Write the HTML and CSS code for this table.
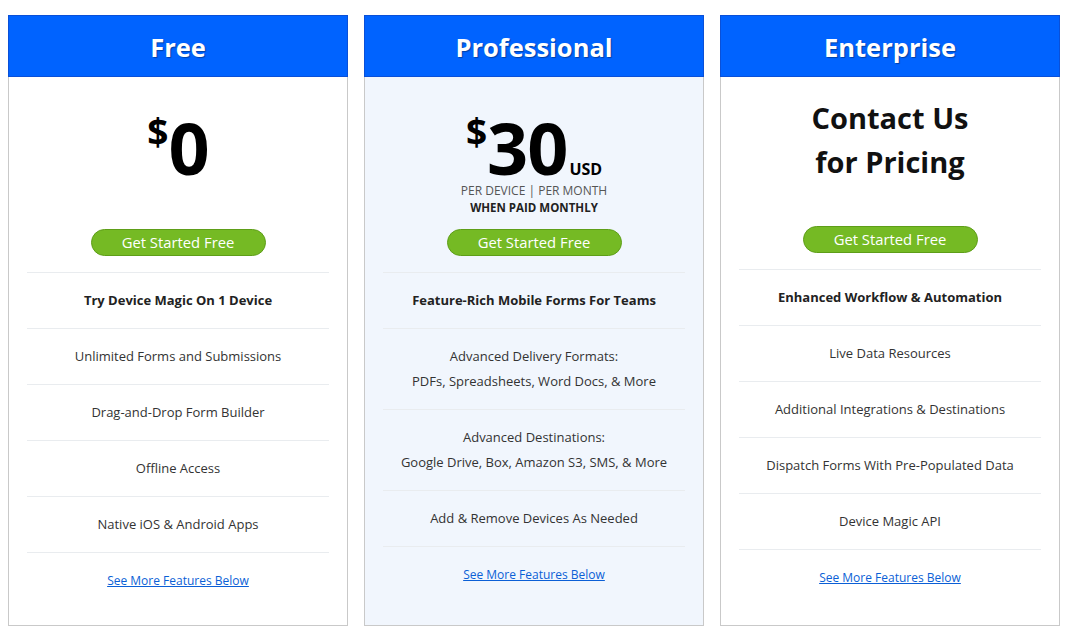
FILE: index.html
```html
<!DOCTYPE html>
<html lang="en">
<head>
<meta charset="utf-8">
<title>Pricing</title>
<link rel="stylesheet" href="styles.css">
</head>
<body>
<div class="plans">
  <section class="plan">
    <header class="plan-head">Free</header>
    <div class="price">
      <div class="amount"><span class="cur">$</span>0</div>
    </div>
    <a class="btn" href="#">Get Started Free</a>
    <ul class="features">
      <li class="lead">Try Device Magic On 1 Device</li>
      <li>Unlimited Forms and Submissions</li>
      <li>Drag-and-Drop Form Builder</li>
      <li>Offline Access</li>
      <li>Native iOS &amp; Android Apps</li>
    </ul>
    <a class="more" href="#">See More Features Below</a>
  </section>
  <section class="plan plan-pro">
    <header class="plan-head">Professional</header>
    <div class="price">
      <div class="amount"><span class="cur">$</span>30<span class="usd">USD</span></div>
      <div class="per">PER DEVICE | PER MONTH</div>
      <div class="paid">WHEN PAID MONTHLY</div>
    </div>
    <a class="btn" href="#">Get Started Free</a>
    <ul class="features">
      <li class="lead">Feature-Rich Mobile Forms For Teams</li>
      <li>Advanced Delivery Formats:<br>PDFs, Spreadsheets, Word Docs, &amp; More</li>
      <li>Advanced Destinations:<br>Google Drive, Box, Amazon S3, SMS, &amp; More</li>
      <li>Add &amp; Remove Devices As Needed</li>
    </ul>
    <a class="more" href="#">See More Features Below</a>
  </section>
  <section class="plan">
    <header class="plan-head">Enterprise</header>
    <div class="price price-contact">
      <div class="contact">Contact Us<br>for Pricing</div>
    </div>
    <a class="btn" href="#">Get Started Free</a>
    <ul class="features">
      <li class="lead">Enhanced Workflow &amp; Automation</li>
      <li>Live Data Resources</li>
      <li>Additional Integrations &amp; Destinations</li>
      <li>Dispatch Forms With Pre-Populated Data</li>
      <li>Device Magic API</li>
    </ul>
    <a class="more" href="#">See More Features Below</a>
  </section>
</div>
</body>
</html>
```

FILE: styles.css
```css
* { box-sizing: border-box; }
html, body { margin: 0; padding: 0; background: #ffffff; }
body {
  font-family: "Open Sans", "Noto Sans", sans-serif;
  color: #333;
  padding: 15px 10px 0 8px;
}
.plans {
  display: grid;
  grid-template-columns: repeat(3, 340px);
  column-gap: 16px;
  height: 611px;
}
.plan {
  display: flex;
  flex-direction: column;
  align-items: center;
  border: 1px solid #c9c9c9;
  border-top: none;
  background: #fff;
}
.plan-pro { background: #f1f6fd; }
.plan-head {
  align-self: stretch;
  margin: 0 -1px;
  height: 62px;
  background: #0063ff;
  border: 1px solid #0a50d8;
  color: #fff;
  font-weight: 700;
  font-size: 25.5px;
  line-height: 62px;
  text-align: center;
  text-shadow: 1px 1px 1px rgba(0,0,0,0.35);
}
.price {
  height: 152px;
  padding-top: 34px;
  text-align: center;
  color: #000;
}
.price-contact { height: 149px; padding-top: 19px; }
.amount {
  font-size: 72px;
  font-weight: 700;
  line-height: 72px;
  letter-spacing: -1px;
}
.cur {
  font-size: 37px;
  vertical-align: top;
  line-height: 36px;
  position: relative;
  top: 3px;
  margin-right: 1px;
}
.usd {
  font-size: 16px;
  line-height: 1;
  letter-spacing: 0;
  margin-left: 2px;
}
.per {
  font-size: 12px;
  line-height: 16px;
  color: #555;
}
.paid {
  font-size: 11.5px;
  font-weight: 700;
  line-height: 18px;
  color: #222;
}
.contact {
  font-size: 29px;
  font-weight: 700;
  line-height: 44px;
  color: #111;
}
.btn {
  display: block;
  width: 175px;
  height: 27px;
  border-radius: 14px;
  background: #75ba24;
  border: 1px solid #5e9e18;
  color: #fff;
  font-size: 14.8px;
  line-height: 25px;
  text-align: center;
  text-decoration: none;
}
.features {
  list-style: none;
  margin: 16px 0 0;
  padding: 0;
  width: 302px;
  border-top: 1px solid #e9ecef;
}
.features li {
  padding: 15px 0;
  border-bottom: 1px solid #e9ecef;
  text-align: center;
  font-size: 13px;
  line-height: 25px;
  color: #333;
}
.features li.lead { font-weight: 700; color: #222; }
.more {
  margin-top: 19px;
  font-size: 12px;
  line-height: 18px;
  color: #0b5fd6;
  text-decoration: underline;
}
```
